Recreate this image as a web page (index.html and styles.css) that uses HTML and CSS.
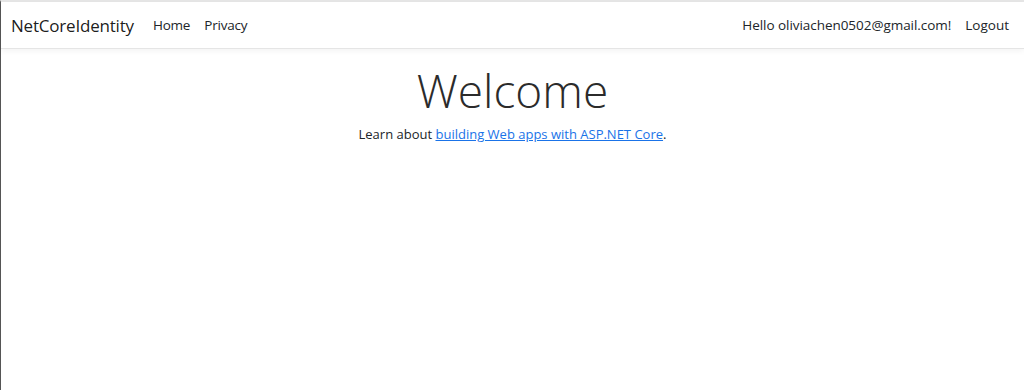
FILE: index.html
```html
<!DOCTYPE html>
<html lang="en">
<head>
  <meta charset="UTF-8" />
  <meta name="viewport" content="width=device-width, initial-scale=1.0"/>
  <title>Home Page - NetCoreIdentity</title>
  <link rel="stylesheet" href="styles.css">
</head>
<body>

<div class="frame">
  <header class="navbar">
    <a class="brand" href="#">NetCoreIdentity</a>
    <nav class="nav-left">
      <a class="nav-link" href="#">Home</a>
      <a class="nav-link" href="#">Privacy</a>
    </nav>
    <nav class="nav-right">
      <span class="nav-link">Hello oliviachen0502@gmail.com!</span>
      <a class="nav-link" href="#">Logout</a>
    </nav>
  </header>

  <main class="content">
    <h1 class="display-4">Welcome</h1>
    <p>Learn about <a href="#">building Web apps with ASP.NET Core</a>.</p>
  </main>
</div>

</body>
</html>
```

FILE: styles.css
```css
* {
  box-sizing: border-box;
}

html, body {
  height: 100%;
}

body {
  margin: 0;
  font-family: "Open Sans", "Liberation Sans", sans-serif;
  color: #212529;
  background: #fff;
}

.frame {
  height: 100%;
  border-left: 1px solid #555;
  border-top: 2px solid #e6e6e6;
}

.navbar {
  display: flex;
  align-items: center;
  height: 47px;
  padding: 0 8px 0 10px;
  background: #fff;
  border-bottom: 1px solid #e5e5e5;
  box-shadow: 0 2px 6px rgba(0, 0, 0, 0.05);
}

.brand {
  font-size: 17px;
  color: rgba(0, 0, 0, 0.9);
  text-decoration: none;
  margin-right: 12px;
  letter-spacing: -0.2px;
}

.nav-left, .nav-right {
  display: flex;
  align-items: center;
}

.nav-right {
  margin-left: auto;
}

.nav-link {
  font-size: 13.5px;
  color: #212529;
  text-decoration: none;
  padding: 0 7px;
}

.nav-left .nav-link {
  letter-spacing: -0.2px;
}

.nav-right .nav-link:first-child {
  letter-spacing: -0.05px;
}

.content {
  text-align: center;
  padding-top: 14px;
}

.display-4 {
  margin: 0 0 7px;
  font-size: 46px;
  font-weight: 300;
  line-height: 1.2;
  color: #2b2b2b;
}

.content p {
  margin: 0;
  font-size: 13px;
}

.content a {
  color: #1a73e8;
}
```
